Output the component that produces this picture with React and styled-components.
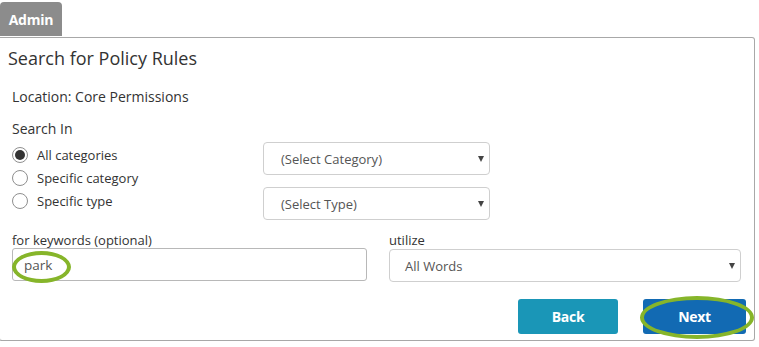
import React from "react";
import styled, { createGlobalStyle } from "styled-components";

const Global = createGlobalStyle`
  html, body { margin: 0; padding: 0; background: #fff; }
  body { font-family: "Open Sans", "Liberation Sans", Arial, sans-serif; color: #333; }
  * { box-sizing: border-box; }
`;

const Page = styled.div`
  width: 759px;
  height: 347px;
  padding-top: 2px;
  overflow: hidden;
`;

const Tab = styled.div`
  display: inline-flex;
  align-items: center;
  justify-content: center;
  width: 62px;
  height: 34px;
  background: #8c8c8c;
  color: #fff;
  font-weight: 700;
  font-size: 14px;
  border-radius: 4px 4px 0 0;
  letter-spacing: -0.2px;
`;

const Panel = styled.div`
  position: relative;
  margin-top: 1px;
  margin-left: -1px;
  width: 756px;
  height: 304px;
  border: 1px solid #a8a8a8;
  border-left-color: #d0d0d0;
  border-radius: 0 3px 3px 3px;
  padding: 8px 12px 0 12px;
`;

const Title = styled.h2`
  margin: 0 0 0 -4px;
  font-size: 18px;
  line-height: 24px;
  font-weight: 400;
  color: #333;
`;

const Text = styled.div`
  font-size: 14px;
  line-height: 18px;
  color: #333;
  margin-top: ${(p) => p.$mt || 0}px;
`;

const SearchGrid = styled.div`
  display: grid;
  grid-template-columns: 251px 227px;
  margin-top: 4px;
`;

const RadioList = styled.div`
  display: flex;
  flex-direction: column;
  padding-top: 1px;
`;

const RadioRow = styled.label`
  display: flex;
  align-items: center;
  gap: 9px;
  height: 23px;
  font-size: 13px;
  color: #333;
`;

const RadioDot = styled.span`
  width: 16px;
  height: 16px;
  border-radius: 50%;
  border: 1px solid #8f8f8f;
  background: #fff;
  display: flex;
  align-items: center;
  justify-content: center;
  &::after {
    content: "";
    width: 10px;
    height: 10px;
    border-radius: 50%;
    background: ${(p) => (p.$checked ? "#333" : "transparent")};
  }
`;

const SelectStack = styled.div`
  display: flex;
  flex-direction: column;
  gap: 12px;
`;

const SelectBox = styled.div`
  position: relative;
  display: flex;
  align-items: center;
  height: 33px;
  padding-left: ${(p) => p.$pad || 17}px;
  border: 1px solid #cfcfcf;
  border-radius: 4px;
  background: #fff;
  font-size: 13px;
  color: #555;
  margin-top: ${(p) => p.$mt || 0}px;
`;

const Arrow = styled.span`
  position: absolute;
  right: 5px;
  top: 50%;
  transform: translateY(-50%);
  width: 0;
  height: 0;
  border-left: 3px solid transparent;
  border-right: 3px solid transparent;
  border-top: 6px solid #444;
`;

const FieldRow = styled.div`
  display: grid;
  grid-template-columns: 355px 352px;
  column-gap: 22px;
  margin-top: 12px;
`;

const Field = styled.div`
  display: flex;
  flex-direction: column;
`;

const FieldLabel = styled.div`
  font-size: 13px;
  line-height: 16px;
  color: #333;
`;

const InputBox = styled.div`
  display: flex;
  align-items: center;
  height: 33px;
  padding-left: 11px;
  border: 1px solid #b8b8b8;
  border-radius: 3px;
  font-size: 13.5px;
  color: #555;
`;

const ButtonRow = styled.div`
  display: flex;
  justify-content: flex-end;
  gap: 25px;
  margin-top: 17px;
  margin-right: -4px;
`;

const Button = styled.button`
  width: ${(p) => p.$w}px;
  height: 35px;
  border: none;
  border-radius: 3px;
  background: ${(p) => p.$bg};
  color: #fff;
  font-family: inherit;
  font-weight: 700;
  font-size: 14px;
  letter-spacing: -0.3px;
`;

const Ring = styled.span`
  position: absolute;
  border: 4px solid #86b52a;
  border-radius: 50%;
  pointer-events: none;
`;

export default function App() {
  return (
    <Page>
      <Global />
      <Tab>Admin</Tab>
      <Panel>
        <Title>Search for Policy Rules</Title>
        <Text $mt={18}>Location: Core Permissions</Text>
        <Text $mt={14}>Search In</Text>
        <SearchGrid>
          <RadioList>
            <RadioRow><RadioDot $checked />All categories</RadioRow>
            <RadioRow><RadioDot />Specific category</RadioRow>
            <RadioRow><RadioDot />Specific type</RadioRow>
          </RadioList>
          <SelectStack>
            <SelectBox>(Select Category)<Arrow /></SelectBox>
            <SelectBox>(Select Type)<Arrow /></SelectBox>
          </SelectStack>
        </SearchGrid>
        <FieldRow>
          <Field>
            <FieldLabel>for keywords (optional)</FieldLabel>
            <InputBox>park</InputBox>
          </Field>
          <Field>
            <FieldLabel>utilize</FieldLabel>
            <SelectBox $pad={15} $mt={1}>All Words<Arrow /></SelectBox>
          </Field>
        </FieldRow>
        <ButtonRow>
          <Button $w={100} $bg="#1a96b7">Back</Button>
          <Button $w={103} $bg="#126ab3">Next</Button>
        </ButtonRow>
        <Ring style={{ left: 12, top: 213, width: 59, height: 32 }} />
        <Ring style={{ left: 640, top: 258, width: 114, height: 43 }} />
      </Panel>
    </Page>
  );
}
